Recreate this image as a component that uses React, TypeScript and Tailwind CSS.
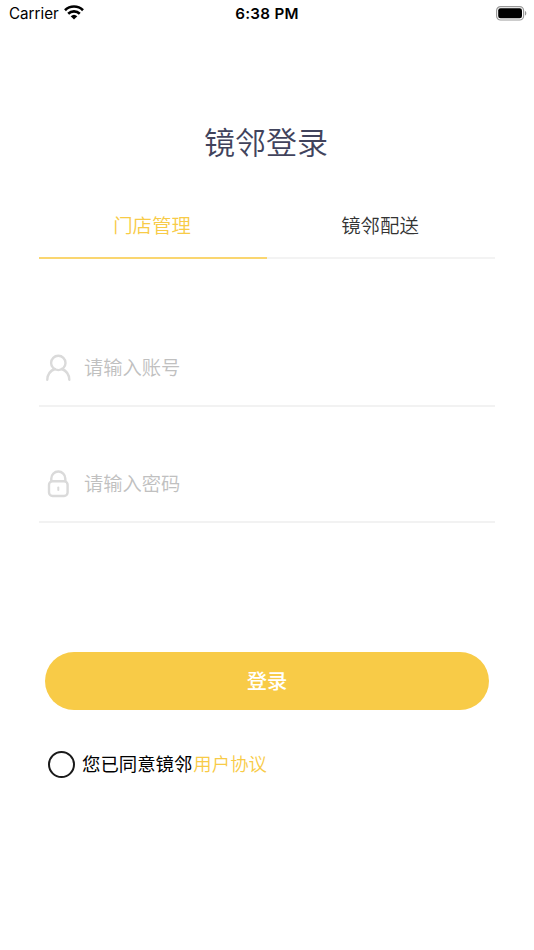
const fields = [
    {
        placeholder: "请输入账号",
        type: "text",
        icon: (
            <svg className="w-[26px] h-[28px] mt-0.5" fill="none" stroke="currentColor" viewBox="0 0 26 28">
                <circle cx="13.300" cy="8.900" r="7.200" strokeWidth={2.4} />
                <path strokeLinecap="round" strokeWidth={2.4} d="M2.300 25.800c.2-5.200 3.200-9.200 7.600-10.800M24.300 25.800c-.2-5.200-3.200-9.200-7.600-10.800" />
            </svg>
        )
    },
    {
        placeholder: "请输入密码",
        type: "password",
        icon: (
            <svg className="w-[26px] h-[28px] mt-0.5" fill="none" stroke="currentColor" viewBox="0 0 26 28">
                <rect x="4" y="11.300" width="18.600" height="14.700" rx="3.500" strokeWidth={2.4} />
                <path strokeWidth={2.4} d="M6.300 11.600V8.500a7 7 0 0114 0v3.100" />
                <path strokeLinecap="round" strokeWidth={2} d="M13.300 17.500v2.500" />
            </svg>
        )
    }
];

function StatusBar() {
    return (
        <div className="h-7 pl-[9px] pr-[7px] grid grid-cols-3 items-center text-black font-normal font-['Inter',sans-serif]">
            <div className="flex items-center gap-[5px] text-[15.200px]">
                Carrier
                <svg className="w-[20px] h-[15px] -mt-0.5" viewBox="0 0 20 15" fill="none" stroke="currentColor">
                    <path strokeWidth={2.6} d="M1 5.200a12.900 12.900 0 0118 0M4.200 8.700a8.300 8.300 0 0111.600 0" />
                    <path fill="currentColor" stroke="none" d="M6.700 11.200a4.800 4.800 0 016.600 0L10 14.500z" />
                </svg>
            </div>
            <div className="pr-[2px] text-center text-[15.200px] font-semibold tracking-[0.300px]">6:38 PM</div>
            <svg className="w-[31px] h-[15px] justify-self-end -mt-px" viewBox="0 0 31 15" fill="none">
                <rect x=".6" y=".6" width="27" height="13.400" rx="4" stroke="#999" strokeWidth={1.2} />
                <rect x="2.200" y="2.300" width="23.800" height="10" rx="2.300" fill="#000" />
                <path d="M29 5v4.600c1.800-.7 1.800-3.900 0-4.600z" fill="#999" />
            </svg>
        </div>
    );
}

export default function App() {
    return (
        <div className="w-[534px] h-[950px] bg-white overflow-hidden font-['Noto_Sans_CJK_SC',sans-serif] font-[350]">
            <StatusBar />
            <h1 className="mt-[90px] pr-[2px] h-[46px] leading-[46px] text-center text-[31px] font-[350] text-[#41435c]">镜邻登录</h1>
            <div className="mx-[39px] mt-[30px] grid grid-cols-2 text-center text-[19.400px] leading-[61px]">
                <div className="h-[65px] pr-[2px] border-b-2 border-[#fad670] text-[#f8cb47]">门店管理</div>
                <div className="h-[65px] pr-[2px] border-b-2 border-[#f3f3f3] text-[#333]">镜邻配送</div>
            </div>
            <div className="mx-[39px] mt-[70px] flex flex-col gap-[38px]">
                {fields.map((field) => (
                    <label key={field.type} className="h-[78px] pl-[6px] flex items-center gap-[13px] border-b-2 border-[#f2f2f2] text-[#dadada]">
                        {field.icon}
                        <input
                            type={field.type}
                            placeholder={field.placeholder}
                            className="flex-1 text-[19.300px] outline-none placeholder:text-[#c0c0c0]"
                        />
                    </label>
                ))}
            </div>
            <button className="mx-[45px] mt-[129px] pb-0.5 w-[444px] h-[58px] block rounded-full bg-[#f8cb47] text-[20.300px] font-medium text-white">登录</button>
            <label className="ml-[48px] mt-[41px] h-[27px] flex items-center text-[18.400px] text-black">
                <span className="mr-[7px] size-[27px] rounded-full border-2 border-[#1a1a1a]"></span>
                <span className="-mt-0.5 font-normal">
                    您已同意镜邻
                    <a className="ml-px font-[350] text-[#f8cb47]">用户协议</a>
                </span>
            </label>
        </div>
    );
}
